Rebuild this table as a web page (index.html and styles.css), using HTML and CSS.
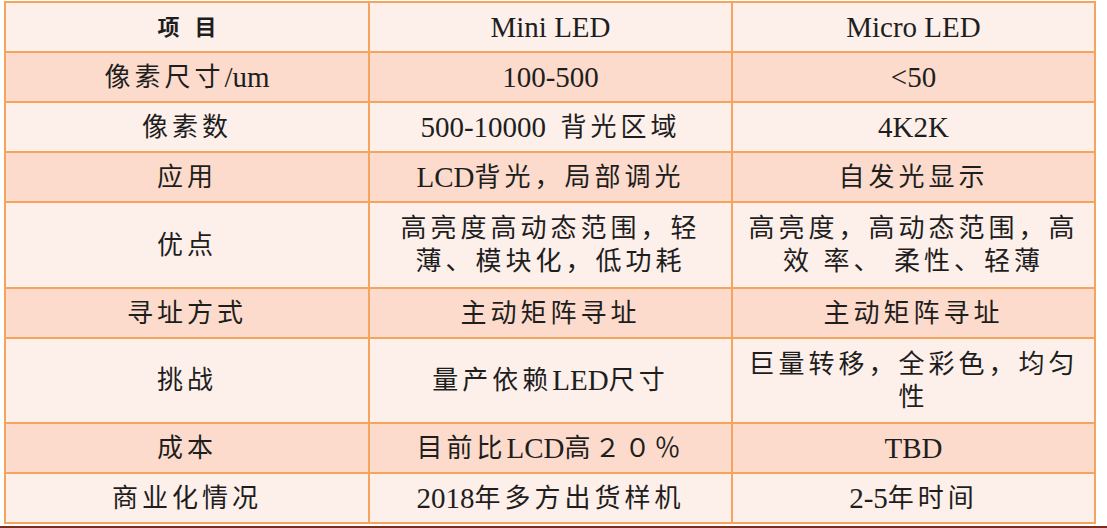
FILE: index.html
```html
<!DOCTYPE html>
<html lang="zh">
<head>
<meta charset="utf-8">
<title>Mini LED vs Micro LED</title>
<link rel="stylesheet" href="styles.css">
</head>
<body>
<div class="page">
  <div class="grid">
    <div class="row lt">
      <div class="cell head-zh">项目</div>
      <div class="cell"><span class="en">Mini LED</span></div>
      <div class="cell"><span class="en">Micro LED</span></div>
    </div>
    <div class="row pk">
      <div class="cell">像素尺寸<span class="en">/um</span></div>
      <div class="cell"><span class="en">100-500</span></div>
      <div class="cell"><span class="en">&lt;50</span></div>
    </div>
    <div class="row lt">
      <div class="cell">像素数</div>
      <div class="cell"><span class="en">500-10000&nbsp;&nbsp;</span>背光区域</div>
      <div class="cell"><span class="en">4K2K</span></div>
    </div>
    <div class="row pk">
      <div class="cell">应用</div>
      <div class="cell"><span class="en">LCD</span>背光，局部调光</div>
      <div class="cell">自发光显示</div>
    </div>
    <div class="row lt">
      <div class="cell">优点</div>
      <div class="cell">高亮度高动态范围，轻薄、模块化，低功耗</div>
      <div class="cell">高亮度，高动态范围，高效 率、 柔性、轻薄</div>
    </div>
    <div class="row pk">
      <div class="cell">寻址方式</div>
      <div class="cell">主动矩阵寻址</div>
      <div class="cell">主动矩阵寻址</div>
    </div>
    <div class="row lt">
      <div class="cell">挑战</div>
      <div class="cell">量产依赖<span class="en">LED</span>尺寸</div>
      <div class="cell">巨量转移，全彩色，均匀性</div>
    </div>
    <div class="row pk">
      <div class="cell">成本</div>
      <div class="cell">目前比<span class="en">LCD</span>高２０％</div>
      <div class="cell"><span class="en">TBD</span></div>
    </div>
    <div class="row lt">
      <div class="cell">商业化情况</div>
      <div class="cell"><span class="en">2018</span>年多方出货样机</div>
      <div class="cell"><span class="en">2-5</span>年时间</div>
    </div>
  </div>
  <div class="rule"></div>
</div>
</body>
</html>
```

FILE: styles.css
```css
html, body {
  margin: 0;
  padding: 0;
  background: #ffffff;
}

.page {
  width: 1107px;
  height: 528px;
  padding-top: 1px;
  box-sizing: border-box;
  overflow: hidden;
}

.grid {
  margin-left: 4px;
  width: 1092px;
  box-sizing: border-box;
  display: grid;
  grid-template-columns: 362px 361px 361px;
  grid-template-rows: 48px 48px 48px 48px 84px 48px 83px 48px 48px;
  gap: 2px;
  padding: 2px;
  background: #f5a45e;
}

.row {
  display: contents;
}

.cell {
  display: flex;
  align-items: center;
  justify-content: center;
  text-align: center;
  padding: 0 12px;
  font-family: "Liberation Serif", "Noto Sans CJK SC", serif;
  font-size: 26px;
  letter-spacing: 4px;
  line-height: 33px;
  color: #1e1e1e;
}

.row.lt .cell {
  background: #fdefea;
}

.row.pk .cell {
  background: #fcdbcc;
}

.en {
  font-size: 29px;
  letter-spacing: 0;
}

.head-zh {
  font-size: 22px;
  font-weight: bold;
  letter-spacing: 15px;
  padding-left: 27px;
}

.rule {
  margin-top: 2px;
  height: 3px;
  background: #7a2b1f;
}
```
